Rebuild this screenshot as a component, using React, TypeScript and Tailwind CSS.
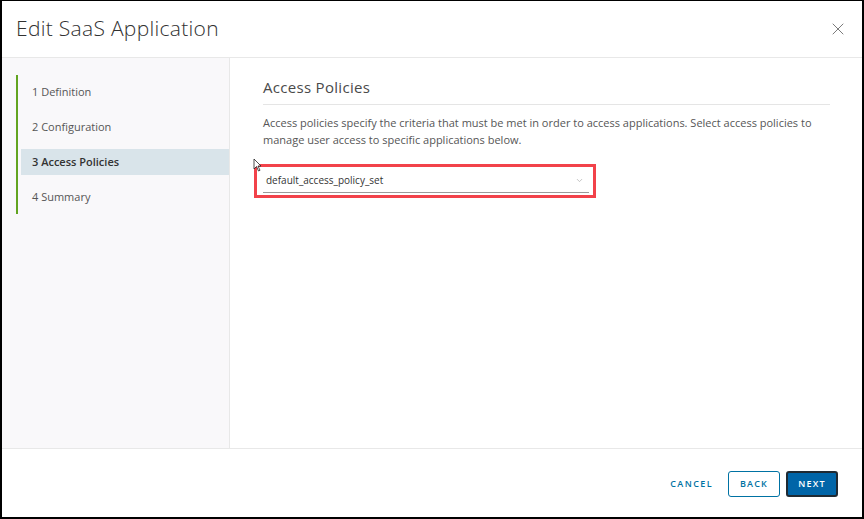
import { X, ChevronDown } from 'lucide-react';

const steps = ['1 Definition', '2 Configuration', '3 Access Policies', '4 Summary'];

export default function App() {
  return (
    <div
      className="w-[864px] h-[519px] bg-white border-t border-l-2 border-r-2 border-b-2 border-black flex flex-col text-[#333]"
      style={{ fontFamily: '"Open Sans", "Noto Sans", sans-serif' }}
    >
      {/* Header */}
      <div className="h-[57px] flex items-center justify-between pl-[14px] pr-[14px] border-b border-[#e8e8e8] shrink-0">
        <h1 className="text-[21px] font-light tracking-[0.3px] text-[#313131] leading-none -mt-[2px]">Edit SaaS Application</h1>
        <X className="w-[20px] h-[20px] text-[#6f6f6f]" strokeWidth={1.1} />
      </div>

      {/* Body */}
      <div className="flex flex-1 min-h-0 border-b border-[#e8e8e8]">
        {/* Steps */}
        <div className="w-[228px] shrink-0 bg-[#f9f8fa] border-r border-[#e8e8e8] pt-[17px] pl-[14px]">
          <div className="border-l-2 border-[#62a420] pl-[3px] py-[4px] flex flex-col gap-[9px]">
            {steps.map((s, i) => (
              <div
                key={s}
                className={`h-[26px] flex items-center pl-[11px] text-[11px] ${
                  i === 2 ? 'bg-[#d9e4ea] font-semibold text-[#333]' : 'text-[#565656]'
                }`}
              >
                {s}
              </div>
            ))}
          </div>
        </div>

        {/* Content */}
        <div className="flex-1 relative pt-[18px] pl-[33px] pr-[32px]">
          <h2 className="text-[15px] tracking-[0.3px] text-[#4a4a4a] pb-[5px] border-b border-[#e5e5e5]">Access Policies</h2>
          <p className="mt-[9px] text-[11px] leading-[17px] text-[#565656]">
            Access policies specify the criteria that must be met in order to access applications. Select access policies to
            manage user access to specific applications below.
          </p>

          <div className="mt-[16px] -ml-[9px] w-[342px] h-[34px] border-[3px] border-[#f2424a] pl-[6px] pr-[4px] pt-[3px]">
            <div className="flex items-center justify-between h-[23px] border-b border-[#9a9a9a] pl-[3px] pr-[5px]">
              <span className="text-[10px] text-[#333] font-medium">default_access_policy_set</span>
              <ChevronDown className="w-[9px] h-[9px] text-[#b0b0b0]" />
            </div>
          </div>

          {/* mouse cursor */}
          <svg className="absolute left-[23px] top-[100px]" width="9" height="14" viewBox="0 0 9 14">
            <path d="M1 1 L1 11 L3.5 8.5 L5.5 13 L7 12.3 L5 8 L8 8 Z" fill="#fff" stroke="#222" strokeWidth="0.8" />
          </svg>
        </div>
      </div>

      {/* Footer */}
      <div className="h-[68px] shrink-0 flex items-center justify-end gap-[6px] pr-[24px] pt-[2px]">
        <button className="h-[26px] px-[7px] text-[9px] font-semibold tracking-[1.4px] text-[#0072a3]">CANCEL</button>
        <button className="h-[26px] w-[52px] ml-[2px] border border-[#0072a3] rounded-[3px] text-[9px] font-semibold tracking-[1.2px] text-[#0072a3]">
          BACK
        </button>
        <button className="h-[26px] w-[52px] bg-[#0065a8] border-2 border-[#1f2a33] rounded-[3px] text-[9px] font-semibold tracking-[1.2px] text-white">
          NEXT
        </button>
      </div>
    </div>
  );
}
